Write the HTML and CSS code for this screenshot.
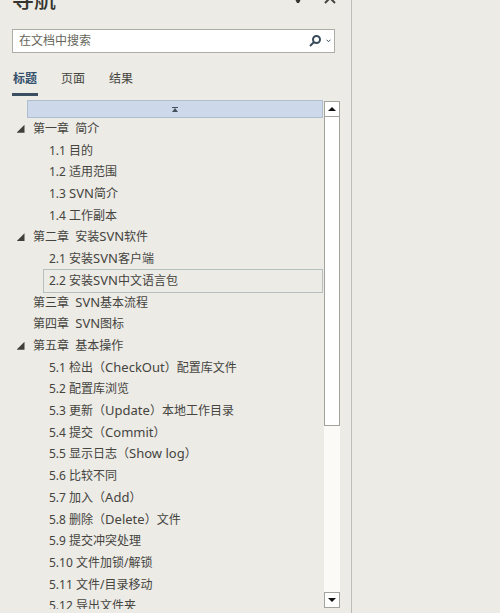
FILE: index.html
```html
<!DOCTYPE html>
<html lang="zh-CN">
<head>
<meta charset="utf-8">
<meta name="viewport" content="width=device-width, initial-scale=1">
<title>导航</title>
<link rel="stylesheet" href="styles.css">
</head>
<body>
<aside class="pane">
  <header class="pane-head">
    <h1>导航</h1>
    <button class="head-btn" type="button" aria-label="选项"><svg width="8" height="6" viewBox="0 0 8 6"><path d="M0 0h8L5 6H3z"/></svg></button>
    <button class="head-btn" type="button" aria-label="关闭"><svg width="12" height="12" viewBox="0 0 12 12"><path class="line" d="M1 1l10 10M11 1L1 11"/></svg></button>
  </header>
  <form class="search">
    <input type="text" placeholder="在文档中搜索" aria-label="在文档中搜索">
    <button type="button" aria-label="搜索"><svg width="12" height="12" viewBox="0 0 12 12"><circle cx="7.500" cy="4.500" r="3.500"/><path d="M5 7L1 11"/></svg></button>
    <button type="button" aria-label="搜索选项"><svg class="chevron" width="5" height="4" viewBox="0 0 5 4"><path d="M.5 .7l2 2 2-2"/></svg></button>
  </form>
  <nav class="tabs">
    <a class="active" href="#headings">标题</a>
    <a href="#pages">页面</a>
    <a href="#results">结果</a>
  </nav>
  <div class="outline">
    <div class="content">
      <button class="to-top" type="button" aria-label="跳转到开头"><svg width="6" height="5" viewBox="0 0 6 5"><path d="M0 0h6v1H0zM3 1L6 5H0z"/></svg></button>
      <ul class="tree">
        <li class="chapter"><button type="button" aria-label="折叠"></button><a href="#c1">第一章  简介</a></li>
        <li><a href="#c1-1">1.1 目的</a></li>
        <li><a href="#c1-2">1.2 适用范围</a></li>
        <li><a href="#c1-3">1.3 <span lang="en">SVN</span>简介</a></li>
        <li><a href="#c1-4">1.4 工作副本</a></li>
        <li class="chapter"><button type="button" aria-label="折叠"></button><a href="#c2">第二章  安装<span lang="en">SVN</span>软件</a></li>
        <li><a href="#c2-1">2.1 安装<span lang="en">SVN</span>客户端</a></li>
        <li><a class="current" href="#c2-2">2.2 安装<span lang="en">SVN</span>中文语言包</a></li>
        <li class="chapter"><a href="#c3">第三章  <span lang="en">SVN</span>基本流程</a></li>
        <li class="chapter"><a href="#c4">第四章  <span lang="en">SVN</span>图标</a></li>
        <li class="chapter"><button type="button" aria-label="折叠"></button><a href="#c5">第五章  基本操作</a></li>
        <li><a href="#c5-1">5.1 检出（<span lang="en">CheckOut</span>）配置库文件</a></li>
        <li><a href="#c5-2">5.2 配置库浏览</a></li>
        <li><a href="#c5-3">5.3 更新（<span lang="en">Update</span>）本地工作目录</a></li>
        <li><a href="#c5-4">5.4 提交（<span lang="en">Commit</span>）</a></li>
        <li><a href="#c5-5">5.5 显示日志（<span lang="en">Show log</span>）</a></li>
        <li><a href="#c5-6">5.6 比较不同</a></li>
        <li><a href="#c5-7">5.7 加入（<span lang="en">Add</span>）</a></li>
        <li><a href="#c5-8">5.8 删除（<span lang="en">Delete</span>）文件</a></li>
        <li><a href="#c5-9">5.9 提交冲突处理</a></li>
        <li><a href="#c5-10">5.10 文件加锁/解锁</a></li>
        <li><a href="#c5-11">5.11 文件/目录移动</a></li>
        <li><a href="#c5-12">5.12 导出文件夹</a></li>
      </ul>
    </div>
    <div class="scrollbar">
      <button type="button" aria-label="向上滚动"><svg width="8" height="4" viewBox="0 0 8 4"><path d="M4 0l4 4H0z"/></svg></button>
      <div class="track"><div class="thumb"></div></div>
      <button type="button" aria-label="向下滚动"><svg width="8" height="4" viewBox="0 0 8 4"><path d="M0 0h8L4 4z"/></svg></button>
    </div>
  </div>
</aside>
<main class="page"></main>
</body>
</html>
```
FILE: styles.css
```css
* {
  box-sizing: border-box;
}

body {
  display: grid;
  grid-template-columns: 352px 1fr;
  height: 100vh;
  margin: 0;
  overflow: hidden;
  background: #ecebe6;
  color: #45443e;
  font: 12px/20px "Noto Sans", "Noto Sans CJK SC", sans-serif;
}

button {
  display: flex;
  align-items: center;
  justify-content: center;
  padding: 0;
  border: 0;
  background: none;
}

a {
  color: inherit;
  text-decoration: none;
}

.pane {
  display: flex;
  flex-direction: column;
  min-height: 0;
  padding: 0 12px 4px;
  border-right: 1px solid #bdbebb;
}

/* The header is scrolled partly out of the window. */
.pane-head {
  display: flex;
  flex: none;
  align-items: center;
  height: 32px;
  margin: -18px 0 15px;
}

.pane-head h1 {
  flex: 1;
  margin: 0;
  color: #35342f;
  font-size: 22px;
  font-weight: 500;
  line-height: 32px;
}

.head-btn {
  width: 42px;
  fill: #35342f;
}

.head-btn:first-of-type {
  padding: 4px 10px 0 0;
}

.head-btn:last-child {
  width: 12px;
  margin-right: 3px;
}

.line {
  fill: none;
  stroke: #45443e;
  stroke-width: 2;
}

.search {
  display: flex;
  flex: none;
  height: 24px;
  margin-right: 4px;
  border: 1px solid #adada8;
  background: #fff;
}

.search input {
  flex: 1;
  min-width: 0;
  padding: 0 6px;
  border: 0;
  outline: 0;
  background: none;
  color: inherit;
  font: inherit;
}

.search input::placeholder {
  color: #66665a;
  opacity: 1;
}

.search button {
  width: 16px;
}

.search button:last-child {
  width: 11px;
}

.search svg {
  fill: none;
  stroke: #394b59;
  stroke-width: 2;
}

.search .chevron {
  stroke-width: 1;
}

.tabs {
  display: flex;
  flex: none;
  gap: 22px;
  margin: 16px 0 4px;
}

.tabs a {
  height: 27px;
  padding: 0 1px;
  border-bottom: 3px solid transparent;
}

.tabs .active {
  border-color: #3b4d60;
  color: #34506b;
  font-weight: 700;
}

.outline {
  display: flex;
  flex: 1;
  min-height: 0;
}

.content {
  display: flex;
  flex: 1;
  flex-direction: column;
  min-width: 0;
  margin-right: 1px;
  overflow: hidden;
}

.to-top {
  flex: none;
  height: 18px;
  margin-left: 15px;
  border: 1px solid #adbfce;
  background: #cdd9eb;
  fill: #45505c;
}

/* The last row runs past the lower edge and is cut off there. */
.tree {
  display: grid;
  flex: 1;
  grid-auto-rows: 1fr;
  margin: 0 0 -8px;
  padding: 0;
  line-height: 21px;
  list-style: none;
  white-space: pre;
}

.tree li {
  display: flex;
  align-items: stretch;
  padding-left: 32px;
}

.tree a {
  display: block;
  flex: 1;
  margin-right: 1px;
  padding-left: 5px;
}

.tree [lang="en"] {
  font-size: 13px;
  line-height: 16px;
}

.tree .current {
  outline: 1px solid #b6c0c1;
}

.tree .chapter {
  padding-left: 16px;
}

.tree button {
  width: 15px;
  margin-left: -15px;
}

.tree button::before {
  width: 8px;
  height: 8px;
  background: #3f3f39;
  clip-path: polygon(100% 0, 100% 100%, 0 100%);
  content: "";
}

.scrollbar {
  display: flex;
  flex: none;
  flex-direction: column;
  width: 16px;
  margin: 1px -1px 1px 0;
}

.scrollbar button {
  height: 16px;
  border: 1px solid #a3a39d;
  background: #fff;
  fill: #111;
}

.track {
  flex: 1;
  background: #fbfaf6;
}

.thumb {
  height: 65%;
  border: 1px solid #a3a39d;
  border-top: 0;
  background: #fff;
}
```
